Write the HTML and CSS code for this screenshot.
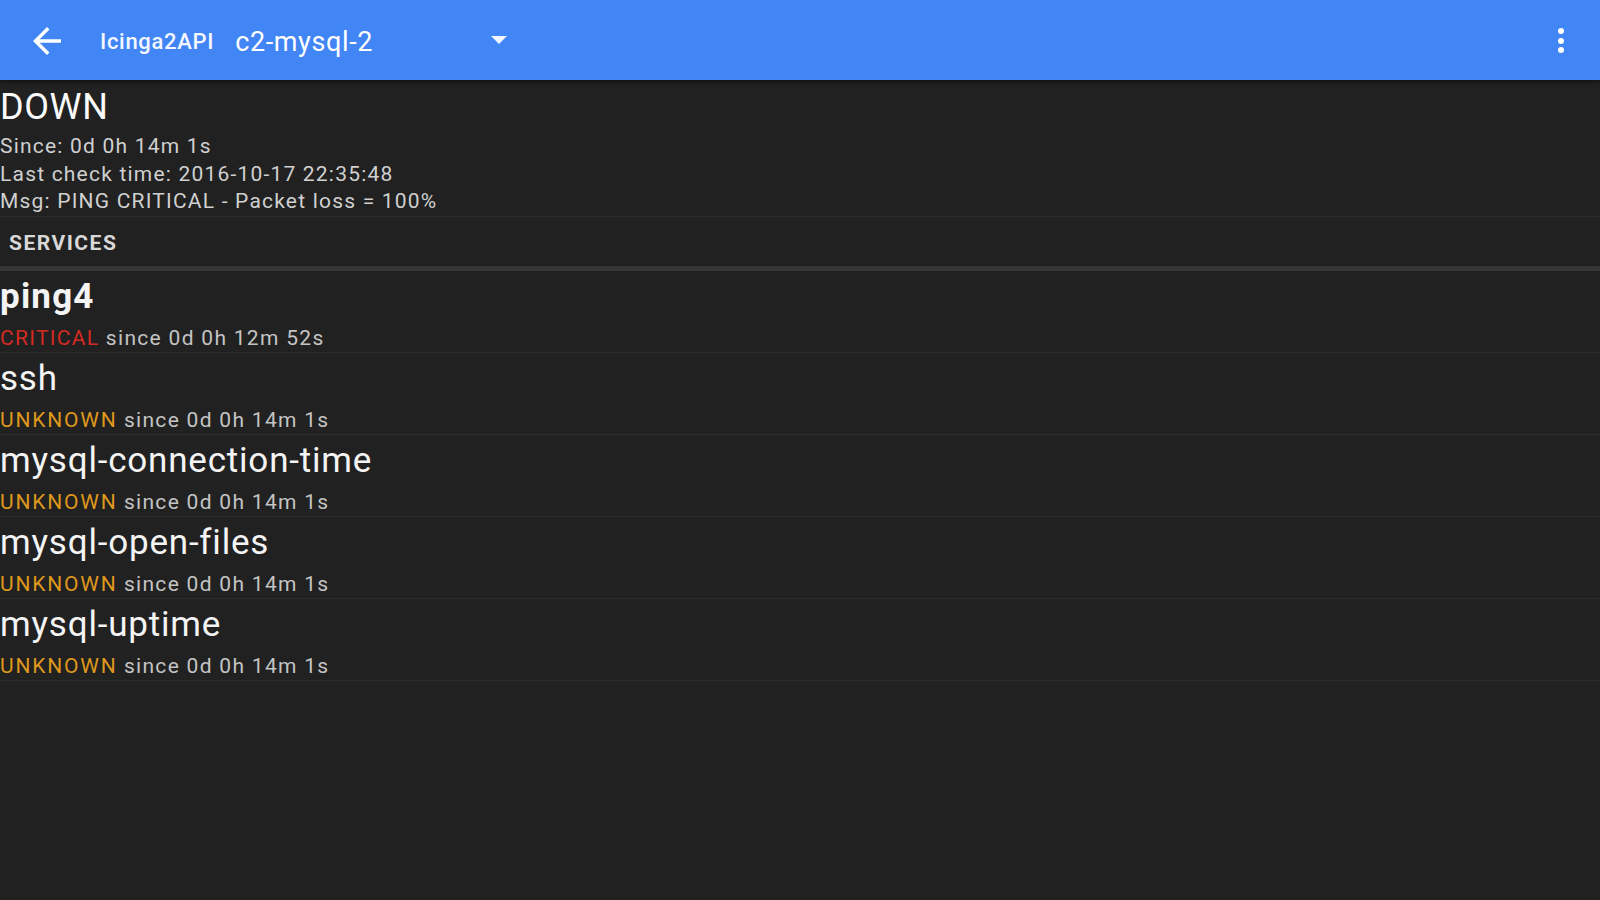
FILE: index.html
```html
<!DOCTYPE html>
<html lang="en">
<head>
<meta charset="utf-8">
<title>Icinga2API - c2-mysql-2</title>
<link rel="stylesheet" href="styles.css">
</head>
<body>
<header class="toolbar">
  <svg class="back" viewBox="0 0 24 24" width="42" height="42"><path fill="#fff" d="M20 11H7.83l5.59-5.59L12 4l-8 8 8 8 1.41-1.41L7.83 13H20v-2z"/></svg>
  <span class="app-title">Icinga2API</span>
  <div class="spinner">
    <span class="host-name">c2-mysql-2</span>
    <svg class="caret" viewBox="0 0 16 8" width="16" height="8"><path fill="#fff" d="M0 0h16L8 8z"/></svg>
  </div>
  <div class="spacer"></div>
  <div class="overflow"><span></span><span></span><span></span></div>
</header>
<main class="content">
  <section class="host">
    <div class="host-state">DOWN</div>
    <div class="host-line">Since: 0d 0h 14m 1s</div>
    <div class="host-line">Last check time: 2016-10-17 22:35:48</div>
    <div class="host-line">Msg: PING CRITICAL - Packet loss = 100%</div>
  </section>
  <div class="section-header">SERVICES</div>
  <ul class="services">
    <li class="service">
      <div class="svc-name bold">ping4</div>
      <div class="svc-status"><span class="critical">CRITICAL</span> since 0d 0h 12m 52s</div>
    </li>
    <li class="service">
      <div class="svc-name">ssh</div>
      <div class="svc-status"><span class="unknown">UNKNOWN</span> since 0d 0h 14m 1s</div>
    </li>
    <li class="service">
      <div class="svc-name">mysql-connection-time</div>
      <div class="svc-status"><span class="unknown">UNKNOWN</span> since 0d 0h 14m 1s</div>
    </li>
    <li class="service">
      <div class="svc-name">mysql-open-files</div>
      <div class="svc-status"><span class="unknown">UNKNOWN</span> since 0d 0h 14m 1s</div>
    </li>
    <li class="service">
      <div class="svc-name">mysql-uptime</div>
      <div class="svc-status"><span class="unknown">UNKNOWN</span> since 0d 0h 14m 1s</div>
    </li>
  </ul>
</main>
</body>
</html>
```
FILE: styles.css
```css
html, body {
  margin: 0;
  padding: 0;
  height: 100%;
}
body {
  background: #212121;
  font-family: Roboto, "Liberation Sans", sans-serif;
  color: #f2f2f2;
  overflow: hidden;
}
.toolbar {
  height: 80px;
  background: #4285f4;
  display: flex;
  align-items: center;
  box-shadow: 0 2px 4px rgba(0,0,0,0.5);
  position: relative;
  z-index: 1;
}
.back {
  margin-left: 26px;
  flex: none;
  margin-top: 2px;
}
.app-title {
  margin-left: 32px;
  margin-top: 3px;
  font-size: 22px;
  font-weight: 500;
  color: #f4f7ff;
  letter-spacing: 0.7px;
}
.spinner {
  display: flex;
  align-items: center;
  margin-left: 21px;
  margin-top: 3px;
  width: 272px;
}
.host-name {
  font-size: 27px;
  color: #fff;
  letter-spacing: 0.6px;
  flex: 1;
}
.caret {
  margin-top: -4px;
  opacity: 0.92;
}
.spacer { flex: 1; }
.overflow {
  display: flex;
  flex-direction: column;
  gap: 3.5px;
  margin-right: 36px;
  margin-top: 1px;
}
.overflow span {
  width: 6px;
  height: 6px;
  border-radius: 50%;
  background: #fff;
}
.content {
  display: flex;
  flex-direction: column;
}
.host {
  padding-top: 7px;
  border-bottom: 1px solid #2b2b2b;
}
.host-state {
  font-size: 36px;
  line-height: 40px;
  color: #fafafa;
  margin-bottom: 6px;
  letter-spacing: 0.6px;
}
.host-line {
  font-size: 21px;
  line-height: 27.5px;
  color: #d0d0d0;
  letter-spacing: 1.2px;
}
.section-header {
  font-size: 21px;
  font-weight: 700;
  line-height: 46px;
  padding-top: 3px;
  padding-left: 9px;
  color: #d8d8d8;
  letter-spacing: 1.5px;
  border-bottom: 5px solid #363636;
}
.services {
  list-style: none;
  margin: 0;
  padding: 0;
}
.service {
  height: 82px;
  padding-top: 5px;
  box-sizing: border-box;
  border-bottom: 1px solid #2c2c2c;
}
.svc-name {
  font-size: 35px;
  line-height: 42px;
  color: #f4f4f4;
  letter-spacing: 0.8px;
}
.svc-name.bold {
  font-weight: 700;
  letter-spacing: 1.2px;
}
.svc-status {
  margin-top: 7px;
  font-size: 21px;
  line-height: 26px;
  color: #c4c4c4;
  letter-spacing: 1.3px;
}
.critical { color: #d42a22; letter-spacing: 1.3px; }
.unknown { color: #df971c; letter-spacing: 1.8px; }
```
